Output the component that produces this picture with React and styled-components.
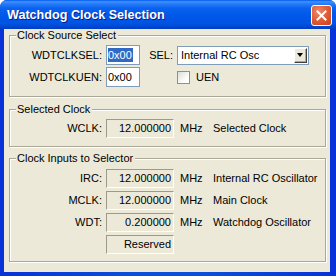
import styled, { createGlobalStyle } from "styled-components"

const Global = createGlobalStyle`
  html, body {
    margin: 0;
    padding: 0;
    background: #fff;
  }
  body {
    font-family: "Liberation Sans", Arial, sans-serif;
    font-size: 11px;
    color: #000;
  }
`

const inputs = [
  { label: "IRC:", value: "12.000000", unit: "MHz", desc: "Internal RC Oscillator" },
  { label: "MCLK:", value: "12.000000", unit: "MHz", desc: "Main Clock" },
  { label: "WDT:", value: "0.200000", unit: "MHz", desc: "Watchdog Oscillator" },
  { label: "", value: "Reserved", unit: "", desc: "" },
]

export default function App() {
  return (
    <>
      <Global />
      <Window>
        <TitleBar>
          <Title>Watchdog Clock Selection</Title>
          <CloseButton aria-label="close">
            <svg width="11" height="11" viewBox="0 0 11 11">
              <path d="M1.5 1.5 L9.5 9.5 M9.5 1.5 L1.5 9.5" stroke="#fff" strokeWidth="2" strokeLinecap="square" />
            </svg>
          </CloseButton>
        </TitleBar>

        <Body>
          <Group $top={6} $pt={8} $pb={8}>
            <Caption>Clock Source Select</Caption>
            <SourceGrid>
              <Label>WDTCLKSEL:</Label>
              <EditBox><Selected>0x00</Selected></EditBox>
              <Label>SEL:</Label>
              <Select>
                <span>Internal RC Osc</span>
                <DropButton><Arrow /></DropButton>
              </Select>

              <Label>WDTCLKUEN:</Label>
              <EditBox>0x00</EditBox>
              <span />
              <CheckRow>
                <CheckBox />
                <span>UEN</span>
              </CheckRow>
            </SourceGrid>
          </Group>

          <Group $top={12} $pt={7} $pb={7}>
            <Caption>Selected Clock</Caption>
            <ClockRow>
              <RowLabel>WCLK:</RowLabel>
              <ReadBox>12.000000</ReadBox>
              <Unit>MHz</Unit>
              <Desc>Selected Clock</Desc>
            </ClockRow>
          </Group>

          <Group $top={11} $pt={8} $pb={6}>
            <Caption>Clock Inputs to Selector</Caption>
            {inputs.map((row) => (
              <ClockRow key={row.value + row.desc}>
                <RowLabel>{row.label}</RowLabel>
                <ReadBox>{row.value}</ReadBox>
                <Unit>{row.unit}</Unit>
                <Desc>{row.desc}</Desc>
              </ClockRow>
            ))}
          </Group>
        </Body>
      </Window>
    </>
  )
}

const Window = styled.div`
  width: 336px;
  height: 276px;
  box-sizing: border-box;
  display: flex;
  flex-direction: column;
  border-radius: 7px 7px 0 0;
  overflow: hidden;
  background: linear-gradient(to right, #0831d9 0%, #0a4fdc 40%, #0a4fdc 60%, #0831d9 100%);
  padding: 0 6px 4px 4px;
`
const TitleBar = styled.div`
  height: 29px;
  margin: 0 -6px 0 -4px;
  display: flex;
  align-items: center;
  justify-content: space-between;
  padding: 0 4px 0 7px;
  box-sizing: border-box;
  background: linear-gradient(
    to bottom,
    #0058ee 0%,
    #3d93ff 6%,
    #2b7ef8 12%,
    #0a62ef 28%,
    #0057e8 55%,
    #0054e3 80%,
    #0046cf 93%,
    #003dc0 100%
  );
`
const Title = styled.span`
  font-family: "Liberation Sans", Arial, sans-serif;
  font-weight: bold;
  font-size: 12.6px;
  color: #fff;
  text-shadow: 1px 1px 0 #0a1e8a;
  padding-top: 1px;
`
const CloseButton = styled.div`
  width: 21px;
  height: 21px;
  box-sizing: border-box;
  border: 1px solid #fff;
  border-radius: 3px;
  background: radial-gradient(circle at 35% 30%, #ec8a6c 0%, #e0603a 45%, #c8401e 100%);
  display: flex;
  align-items: center;
  justify-content: center;
  margin-top: 1px;
`
const Body = styled.div`
  flex: 1;
  background: #ece9d8;
  padding: 0 4px 0 5px;
  display: flex;
  flex-direction: column;
`
const Group = styled.div`
  position: relative;
  margin-top: ${(p) => p.$top}px;
  padding: ${(p) => p.$pt}px 0 ${(p) => p.$pb}px 0;
  border: 1px solid #aca899;
  box-shadow: inset 1px 1px 0 #fff, 1px 1px 0 #fff;
`
const Caption = styled.span`
  position: absolute;
  top: -7px;
  left: 6px;
  padding: 0 2px 0 1px;
  line-height: 13px;
  background: #ece9d8;
`
const SourceGrid = styled.div`
  display: grid;
  grid-template-columns: 92px 34px 29px 132px;
  grid-auto-rows: 22px;
  column-gap: 4px;
  align-items: center;
`
const Label = styled.span`
  text-align: right;
  white-space: nowrap;
`
const RowLabel = styled(Label)`
  flex: 0 0 92px;
`
const EditBox = styled.div`
  height: 20px;
  box-sizing: border-box;
  border: 1px solid #7f9db9;
  background: #fff;
  padding-left: 1px;
  display: flex;
  align-items: center;
`
const Selected = styled.span`
  background: #316ac5;
  color: #fff;
  line-height: 14px;
  padding-right: 1px;
`
const Select = styled.div`
  height: 19px;
  box-sizing: border-box;
  border: 1px solid #7f9db9;
  background: #fff;
  padding-left: 3px;
  display: flex;
  align-items: center;
  justify-content: space-between;
`
const DropButton = styled.div`
  width: 13px;
  height: 15px;
  margin-right: 1px;
  box-sizing: border-box;
  background: #ece9d8;
  border-style: solid;
  border-width: 1px;
  border-color: #fff #404040 #404040 #fff;
  box-shadow: inset -1px -1px 0 #aca899;
  display: flex;
  align-items: center;
  justify-content: center;
`
const Arrow = styled.span`
  width: 0;
  height: 0;
  border-left: 3.5px solid transparent;
  border-right: 3.5px solid transparent;
  border-top: 4px solid #000;
  margin-left: -1px;
`
const CheckRow = styled.div`
  display: flex;
  align-items: center;
  gap: 6px;
`
const CheckBox = styled.span`
  width: 13px;
  height: 13px;
  box-sizing: border-box;
  border: 1px solid #8e8f8f;
  background: linear-gradient(135deg, #dcdcd6 0%, #fff 70%);
`
const ClockRow = styled.div`
  display: flex;
  align-items: center;
  height: 22px;
`
const ReadBox = styled.div`
  width: 68px;
  height: 19px;
  margin-left: 4px;
  box-sizing: border-box;
  border-style: solid;
  border-width: 1px;
  border-color: #9d9a8c #fff #fff #9d9a8c;
  padding-right: 2px;
  display: flex;
  align-items: center;
  justify-content: flex-end;
`
const Unit = styled.span`
  width: 33px;
  margin-left: 6px;
`
const Desc = styled.span`
  white-space: nowrap;
`
